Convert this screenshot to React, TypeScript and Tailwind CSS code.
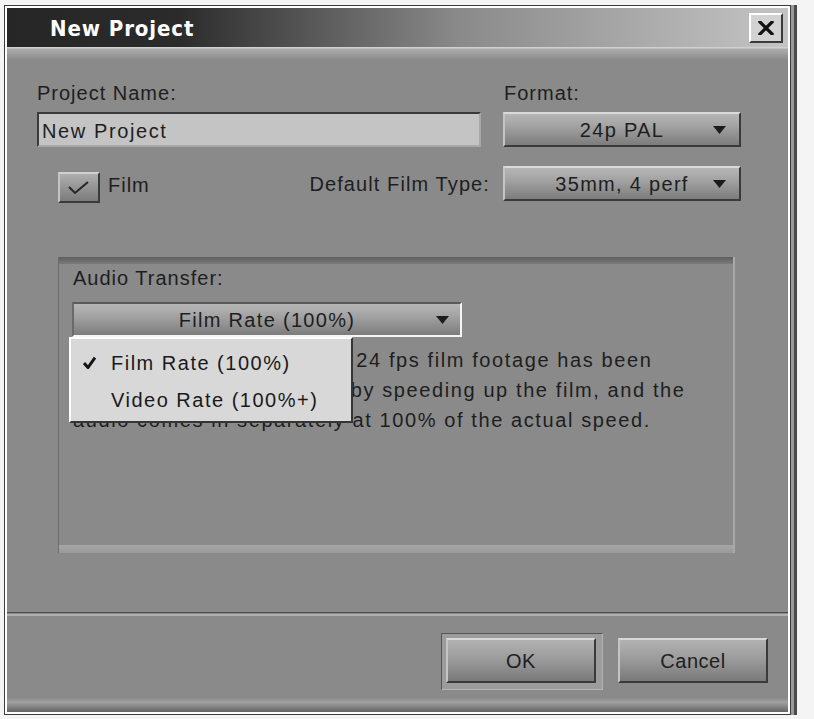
import React from "react";

const F = { fontFamily: '"Liberation Sans", Arial, sans-serif' };

function Arrow() {
  return (
    <svg width="13" height="8" viewBox="0 0 13 8" className="block">
      <polygon points="0,0 13,0 6.5,8" fill="#1c1c1c" />
    </svg>
  );
}

function Dropdown({
  label,
  w,
  pr,
  pressed,
}: {
  label: string;
  w: string;
  pr: string;
  pressed?: boolean;
}) {
  return (
    <div
      className={`relative flex h-[35px] items-center justify-center border-2 bg-[linear-gradient(to_bottom,#b6b6b6_0%,#a2a2a2_40%,#7c7c7c_100%)] ${w} ${
        pressed
          ? "border-t-[#5a5a5a] border-l-[#6a6a6a] border-r-[#f4f4f4] border-b-[#f4f4f4]"
          : "border-t-[#dadada] border-l-[#c4c4c4] border-r-[#3a3a3a] border-b-[#3a3a3a]"
      }`}
    >
      <span className="text-[20px] tracking-[1.3px] text-[#1e1e1e] leading-none">{label}</span>
      <div className={`absolute top-1/2 -translate-y-1/2 ${pr}`}>
        <Arrow />
      </div>
    </div>
  );
}

function Button({ label }: { label: string }) {
  return (
    <div className="flex h-[45px] w-[150px] items-center justify-center border-2 border-t-[#d8d8d8] border-l-[#c4c4c4] border-r-[#3a3a3a] border-b-[#3a3a3a] bg-[linear-gradient(to_bottom,#b2b2b2_0%,#9c9c9c_45%,#7a7a7a_100%)]">
      <span className="text-[20px] tracking-[0.5px] text-[#1e1e1e] leading-none">{label}</span>
    </div>
  );
}

export default function App() {
  return (
    <div className="relative h-[719px] w-[814px] overflow-hidden bg-[#f4f4f4]" style={F}>
      <div className="h-[5px]" />
      <div className="ml-[4px] h-[710px] w-[787px] border border-[#3c3c3c] shadow-[3px_0_0_#9a9a9a,6px_0_0_#4a4a4a]">
        <div className="flex h-full flex-col border-2 border-white bg-[#8a8a8a]">
          {/* Title bar */}
          <div className="flex h-[39px] items-center justify-between bg-[linear-gradient(to_right,#262626_0%,#2b2b2b_22%,#8a8a8a_58%,#c4c4c4_100%)] pl-[43px] pr-[5px]">
            <span
              className="mt-[3px] text-[22px] font-bold tracking-[0.9px] text-white leading-none"
              style={{ fontFamily: '"DejaVu Sans Condensed", "DejaVu Sans", sans-serif' }}
            >
              New Project
            </span>
            <div className="flex h-[30px] w-[34px] items-center justify-center border-2 border-t-white border-l-white border-r-[#3a3a3a] border-b-[#3a3a3a] bg-[#d2d2d2]">
              <svg width="16" height="14" viewBox="0 0 16 14">
                <path d="M2 1 L14 13 M14 1 L2 13" stroke="#111" strokeWidth="3.2" strokeLinecap="square" />
              </svg>
            </div>
          </div>
          {/* band below title */}
          <div className="h-[13px] bg-[linear-gradient(to_bottom,#d0d0d0_0px,#d0d0d0_1px,#acacac_2px,#8a8a8a_13px)]" />

          {/* Body */}
          <div className="flex flex-1 flex-col pt-[21px] text-[#1e1e1e]">
            {/* labels */}
            <div className="flex pl-[30px] text-[20px] leading-[24px] tracking-[1px]">
              <div className="w-[444px]">Project Name:</div>
              <div className="ml-[23px]">Format:</div>
            </div>
            {/* inputs */}
            <div className="mt-[7px] flex pl-[30px]">
              <div className="flex h-[35px] w-[444px] items-center border-2 border-t-[#3a3a3a] border-l-[#3a3a3a] border-r-[#a8a8a8] border-b-[#a8a8a8] bg-[#c4c4c4] pl-[3px]">
                <span className="mt-[2px] text-[20px] tracking-[1.6px] leading-none">New Project</span>
              </div>
              <div className="ml-[22px]">
                <Dropdown label="24p PAL" w="w-[238px]" pr="right-[13px]" />
              </div>
            </div>
            {/* row 2 */}
            <div className="mt-[19px] flex h-[35px] items-start pl-[51px]">
              <div className="mt-[6px] flex h-[31px] w-[42px] items-center justify-center border-2 border-t-[#d0d0d0] border-l-[#c4c4c4] border-r-[#3a3a3a] border-b-[#3a3a3a] bg-[linear-gradient(to_bottom,#aeaeae_0%,#7c7c7c_100%)]">
                <svg width="24" height="16" viewBox="0 0 24 16">
                  <path d="M2 7 L8 13 L21 2" fill="none" stroke="#262626" strokeWidth="2" />
                </svg>
              </div>
              <div className="ml-[8px] mt-[7px] text-[20px] leading-[24px] tracking-[1px]">Film</div>
              <div className="flex h-[35px] flex-1 items-center justify-end pr-[13px] text-[20px] tracking-[1.1px]">
                Default Film Type:
              </div>
              <Dropdown label="35mm, 4 perf" w="w-[238px]" pr="right-[13px]" />
              <div className="w-[47px]" />
            </div>

            {/* group box */}
            <div className="relative ml-[51px] mt-[56px] flex h-[296px] w-[677px] flex-col border-l border-l-[#6c6c6c] border-r-2 border-r-[#a9a9a9]">
              <div className="h-[7px] bg-[linear-gradient(to_bottom,#5e5e5e,#7a7a7a)]" />
              <div className="flex flex-1 flex-col pl-[14px] pt-[2px]">
                <div className="text-[20px] leading-[24px] tracking-[1px]">Audio Transfer:</div>
                <div className="mt-[12px] -ml-[1px]">
                  <Dropdown label="Film Rate (100%)" w="w-[390px]" pr="right-[11px]" pressed />
                </div>
                <div className="mt-[8px] whitespace-nowrap text-[20px] leading-[30px] tracking-[1.6px]">
                  <div>Use this setting when your 24 fps film footage has been</div>
                  <div>transferred into PAL video by speeding up the film, and the</div>
                  <div>audio comes in separately at 100% of the actual speed.</div>
                </div>
              </div>
              <div className="h-[8px] bg-[linear-gradient(to_bottom,#a6a6a6,#9a9a9a)]" />

              {/* open menu */}
              <div className="absolute left-[10px] top-[80px] h-[86px] w-[284px] border-2 border-t-white border-l-white border-r-[#353535] border-b-[#353535] bg-[#d8d8d8] pt-[5px] text-[20px] tracking-[1.5px] text-[#1a1a1a]">
                <div className="flex h-[37px] items-center">
                  <div className="ml-[12px] w-[28px]">
                    <svg width="13" height="13" viewBox="0 0 13 13">
                      <path d="M1 7 L5 11.5 L12 1.5" fill="none" stroke="#151515" strokeWidth="3" />
                    </svg>
                  </div>
                  <span className="leading-none">Film Rate (100%)</span>
                </div>
                <div className="flex h-[37px] items-center">
                  <div className="ml-[12px] w-[28px]" />
                  <span className="leading-none">Video Rate (100%+)</span>
                </div>
              </div>
            </div>

            {/* separator */}
            <div className="mt-[59px] h-[4px] border-t border-t-[#4e4e4e] bg-[linear-gradient(to_bottom,#8a8a8a_0px,#8a8a8a_1px,#b0b0b0_1px,#b0b0b0_3px)]" />

            {/* buttons */}
            <div className="mt-[17px] flex items-start justify-end pr-[20px]">
              <div className="border border-t-[#555] border-l-[#555] border-r-[#b4b4b4] border-b-[#b4b4b4] bg-[#9c9c9c] pb-[6px] pl-[4px] pr-[6px] pt-[4px]">
                <Button label="OK" />
              </div>
              <div className="ml-[15px] mt-[5px]">
                <Button label="Cancel" />
              </div>
            </div>
            <div className="flex-1" />
            <div className="h-[14px] bg-[linear-gradient(to_bottom,#8a8a8a,#a0a0a0_30%,#646464_100%)]" />
          </div>
        </div>
      </div>
    </div>
  );
}
